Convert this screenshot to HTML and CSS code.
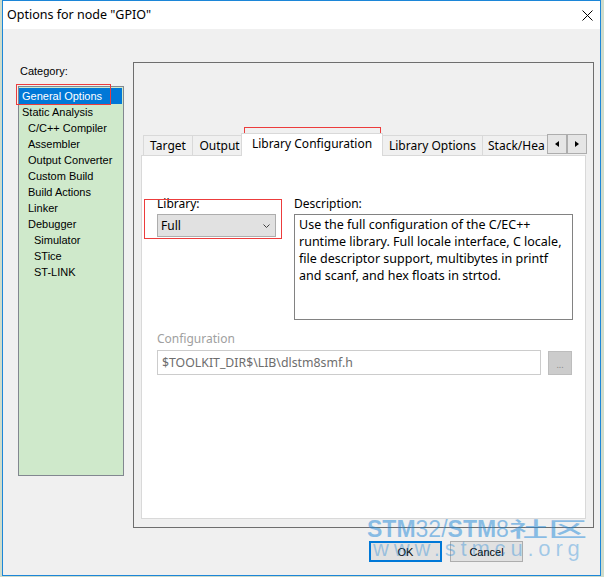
FILE: index.html
```html
<!DOCTYPE html>
<html lang="en">
<head>
  <meta charset="utf-8">
  <title>Options for node "GPIO"</title>
  <link rel="stylesheet" href="styles.css">
</head>
<body>
  <div class="window">
    <div class="titlebar">
      <span class="title">Options for node "GPIO"</span>
      <svg class="close" width="11" height="11" viewBox="0 0 11 11">
        <path d="M0.5 0.5 L10.5 10.5 M10.5 0.5 L0.5 10.5" stroke="#000" stroke-width="1" fill="none"/>
      </svg>
    </div>

    <div class="client">
      <div class="main">
        <div class="category">
          <div class="cat-label">Category:</div>
          <div class="cat-list">
            <div class="item item-selected">General Options</div>
            <div class="item">Static Analysis</div>
            <div class="item lvl1">C/C++ Compiler</div>
            <div class="item lvl1">Assembler</div>
            <div class="item lvl1">Output Converter</div>
            <div class="item lvl1">Custom Build</div>
            <div class="item lvl1">Build Actions</div>
            <div class="item lvl1">Linker</div>
            <div class="item lvl1">Debugger</div>
            <div class="item lvl2">Simulator</div>
            <div class="item lvl2">STice</div>
            <div class="item lvl2">ST-LINK</div>
          </div>
        </div>

        <div class="group">
          <div class="tabstrip">
            <div class="tabs">
              <div class="tab tab-target">Target</div>
              <div class="tab tab-output">Output</div>
              <div class="tab tab-active">Library Configuration</div>
              <div class="tab tab-libopt">Library Options</div>
              <div class="tab tab-stack">Stack/Hea</div>
            </div>
            <div class="tab-arrow">
              <svg width="4" height="6" viewBox="0 0 4 6"><polygon points="4,0 4,6 0,3" fill="#000"/></svg>
            </div>
            <div class="tab-arrow">
              <svg width="4" height="6" viewBox="0 0 4 6"><polygon points="0,0 0,6 4,3" fill="#000"/></svg>
            </div>
          </div>

          <div class="page">
            <div class="row">
              <div class="lib-col">
                <div class="label">Library:</div>
                <div class="combo">
                  <span>Full</span>
                  <svg width="7" height="4" viewBox="0 0 7 4">
                    <path d="M0.5 0.5 L3.5 3.5 L6.5 0.5" stroke="#404040" stroke-width="1" fill="none"/>
                  </svg>
                </div>
              </div>
              <div class="desc-col">
                <div class="label">Description:</div>
                <div class="desc">
                  Use the full configuration of the C/EC++<br>
                  runtime library. Full locale interface, C locale,<br>
                  file descriptor support, multibytes in printf<br>
                  and scanf, and hex floats in strtod.
                </div>
              </div>
            </div>

            <div class="label config-label">Configuration</div>
            <div class="path-row">
              <div class="path">$TOOLKIT_DIR$\LIB\dlstm8smf.h</div>
              <div class="browse">...</div>
            </div>
          </div>
        </div>
      </div>

      <div class="buttons">
        <div class="btn btn-ok">OK</div>
        <div class="btn">Cancel</div>
      </div>
    </div>

    <!-- red annotation boxes drawn over the dialog -->
    <div class="mark mark-general"></div>
    <div class="mark mark-tab"></div>
    <div class="mark mark-combo"></div>

    <div class="watermark">
      <div class="wm-top"><b>STM</b>32/<b>STM</b>8<span class="wm-cjk">社区</span></div>
      <div class="wm-bottom">www.stmcu.org</div>
    </div>
  </div>
</body>
</html>
```

FILE: styles.css
```css
body {
  margin: 0;
  background: #cfdccb;
  font-family: "Noto Sans", sans-serif;
  font-size: 12px;
  color: #000;
}
.window {
  position: relative;
  box-sizing: border-box;
  width: 599px;
  height: 576px;
  margin-left: 2px;
  border: 1px solid #1c86d8;
  background: #f0f0f0;
  overflow: hidden;
}
.titlebar {
  display: flex;
  align-items: center;
  height: 28px;
  padding-left: 4px;
  background: #fff;
}
.title {
  flex: 1;
  font-size: 12.5px;
  margin-top: -2px;
}
.close {
  margin-right: 7px;
}
.client {
  padding: 33px 0 0 15px;
}
.main {
  display: flex;
}
.category {
  width: 106px;
  font-family: "Liberation Sans", sans-serif;
  font-size: 11px;
}
.cat-label {
  line-height: 13px;
  margin-top: 3px;
  margin-bottom: 8px;
  padding-left: 2px;
}
.cat-list {
  box-sizing: border-box;
  height: 390px;
  padding-top: 1px;
  border: 1px solid #828790;
  background: #cfe9cb;
}
.item {
  height: 16px;
  line-height: 16px;
  padding-left: 3px;
  white-space: nowrap;
}
.item-selected {
  margin-right: 1px;
  background: #0078d7;
  color: #fff;
}
.lvl1 {
  padding-left: 9px;
}
.lvl2 {
  padding-left: 15px;
}
.group {
  box-sizing: border-box;
  width: 461px;
  height: 466px;
  margin-left: 9px;
  padding-top: 70px;
  border: 1px solid #6e6e6e;
}
.tabstrip {
  display: flex;
  align-items: flex-end;
  height: 22px;
  margin-left: 9px;
}
.tabs {
  display: flex;
  align-items: flex-end;
  width: 404px;
  height: 22px;
  overflow-x: clip;
  overflow-y: visible;
}
.tab {
  box-sizing: border-box;
  flex-shrink: 0;
  height: 20px;
  margin-left: -1px;
  border: 1px solid #d9d9d9;
  border-bottom: none;
  background: #f0f0f0;
  line-height: 19px;
  text-align: center;
  white-space: nowrap;
}
.tab-target {
  width: 50px;
  margin-left: 0;
}
.tab-output {
  width: 51px;
  padding-left: 4px;
}
.tab-active {
  position: relative;
  z-index: 1;
  width: 142px;
  height: 23px;
  margin-left: -2px;
  margin-bottom: -1px;
  background: #fff;
  line-height: 20px;
}
.tab-libopt {
  width: 101px;
}
.tab-stack {
  width: 66px;
  padding-left: 5px;
  text-align: left;
}
.tab-arrow {
  box-sizing: border-box;
  display: flex;
  align-items: center;
  justify-content: center;
  width: 20px;
  height: 20px;
  margin-bottom: 1px;
  border: 1px solid #adadad;
  background: #e5e5e5;
}
.page {
  box-sizing: border-box;
  width: 445px;
  height: 364px;
  margin-left: 7px;
  padding: 41px 0 0 15px;
  border: 1px solid #d9d9d9;
  background: #fff;
}
.row {
  display: flex;
}
.lib-col {
  width: 137px;
}
.label {
  line-height: 14px;
}
.combo {
  box-sizing: border-box;
  display: flex;
  align-items: center;
  justify-content: space-between;
  width: 119px;
  height: 23px;
  margin-top: 3px;
  padding: 0 5px 0 3px;
  border: 1px solid #adadad;
  background: #e1e1e1;
}
.desc {
  box-sizing: border-box;
  width: 279px;
  height: 106px;
  margin-top: 3px;
  padding: 1px 4px;
  border: 1px solid #828282;
  font-size: 12.5px;
  line-height: 17px;
  white-space: nowrap;
}
.config-label {
  margin-top: 12px;
  color: #a0a0a0;
}
.path-row {
  display: flex;
  margin-top: 4px;
}
.path {
  box-sizing: border-box;
  display: flex;
  align-items: center;
  width: 384px;
  height: 25px;
  padding-left: 4px;
  border: 1px solid #cccccc;
  color: #6d6d6d;
  font-size: 12.3px;
}
.browse {
  box-sizing: border-box;
  width: 24px;
  height: 24px;
  margin: 1px 0 0 7px;
  border: 1px solid #bdbdbd;
  background: #cccccc;
  color: #8a8a8a;
  font-size: 9px;
  line-height: 26px;
  text-align: center;
}
.buttons {
  display: flex;
  justify-content: flex-end;
  gap: 8px;
  margin-top: 13px;
  padding-right: 77px;
}
.btn {
  box-sizing: border-box;
  display: flex;
  align-items: center;
  justify-content: center;
  width: 73px;
  height: 21px;
  border: 1px solid #adadad;
  background: #e1e1e1;
  font-family: "Liberation Sans", sans-serif;
  font-size: 11px;
}
.btn-ok {
  border: 2px solid #0078d7;
}
.mark {
  position: absolute;
  box-sizing: border-box;
  border: 1px solid #ec3c3c;
}
.mark-general {
  left: 13px;
  top: 83px;
  width: 95px;
  height: 21px;
}
.mark-tab {
  left: 241px;
  top: 126px;
  width: 137px;
  height: 27px;
}
.mark-combo {
  left: 141px;
  top: 198px;
  width: 138px;
  height: 40px;
}
.watermark {
  position: absolute;
  left: 364px;
  top: 517px;
  font-family: "Liberation Sans", sans-serif;
  color: rgba(30, 136, 216, 0.5);
  pointer-events: none;
  white-space: nowrap;
}
.wm-top {
  font-size: 23px;
  line-height: 22px;
}
.wm-cjk {
  display: inline-block;
  font-family: "Noto Sans CJK SC", sans-serif;
  font-size: 20px;
  font-weight: 500;
  transform: scaleX(1.95);
  transform-origin: left center;
}
.wm-bottom {
  font-size: 22px;
  line-height: 22px;
  letter-spacing: 4.8px;
  margin-top: -2px;
  margin-left: 6px;
  color: rgba(30, 136, 216, 0.38);
}
```
